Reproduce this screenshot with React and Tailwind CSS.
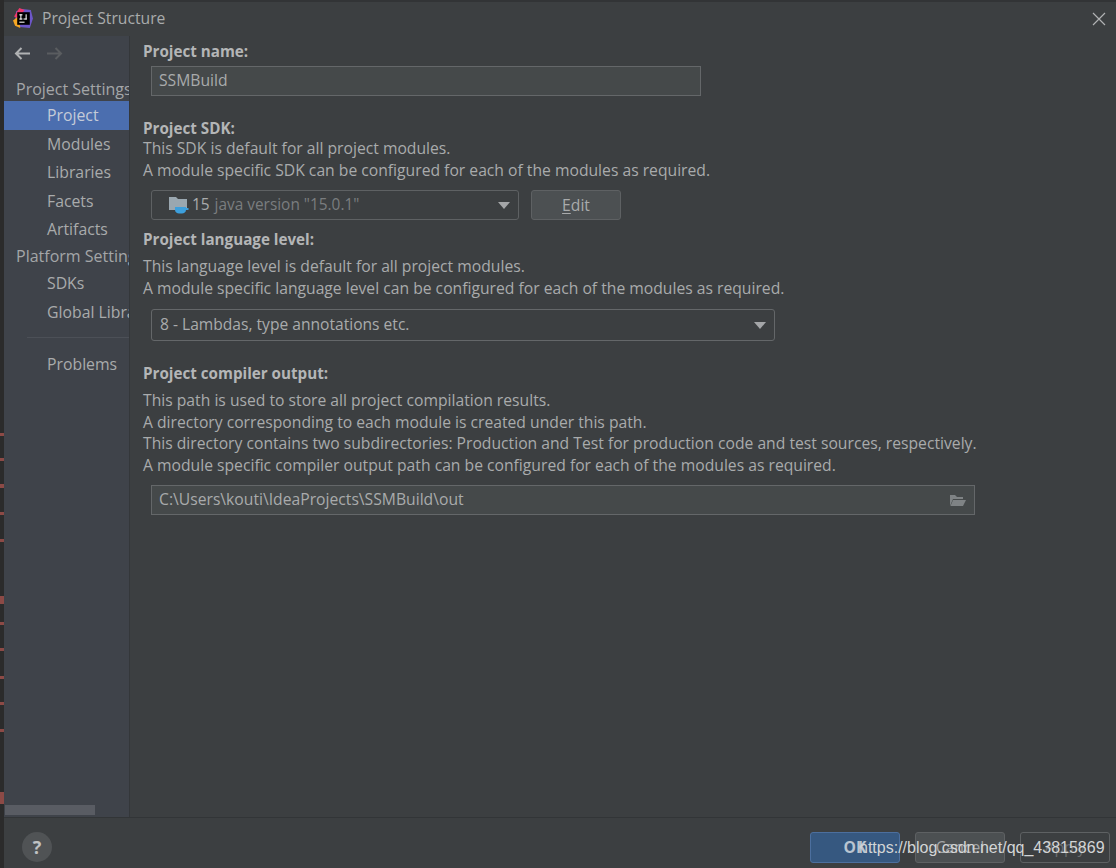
const font = { fontFamily: '"Open Sans", "Noto Sans", sans-serif' };

const Label = ({ children, className = "" }) => (
  <div className={`text-[15.2px] leading-[20px] font-bold text-[#b4b6b7] ${className}`}>{children}</div>
);

const Desc = ({ children }) => (
  <div className="text-[15.7px] leading-[21.5px] text-[#a9abac] whitespace-nowrap">{children}</div>
);

const NavItem = ({ label, active }) => (
  <div
    className={`h-[28.6px] pl-[43px] text-[15.8px] leading-[28px] whitespace-nowrap overflow-hidden ${
      active ? "bg-[#4b6eaf] text-[#c4cbd8]" : "text-[#a9abac]"
    }`}
  >
    {label}
  </div>
);

const NavHeader = ({ label, className }) => (
  <div className={`pl-[12px] text-[16px] text-[#a4a6a8] whitespace-nowrap overflow-hidden ${className}`}>
    {label}
  </div>
);

const Caret = () => (
  <svg width="12" height="7" viewBox="0 0 12 7">
    <path d="M0 0H12L6 7Z" fill="#a4a6a8" />
  </svg>
);

// red marks of the editor gutter, top to bottom
const marks = [
  "mt-[433px] h-[3px]",
  "mt-[22px] h-[3px]",
  "mt-[23px] h-[4px]",
  "mt-[24px] h-[3px]",
  "mt-[24px] h-[3px]",
  "mt-[54px] h-[8px]",
  "mt-[18px] h-[3px]",
  "mt-[23px] h-[3px]",
  "mt-[25px] h-[3px]",
  "mt-[23px] h-[3px]",
  "mt-[24px] h-[3px]",
  "mt-[60px] h-[12px]",
];

const App = () => {
  return (
    <div className="w-[1116px] h-[868px] flex bg-[#3c3f41] overflow-hidden" style={font}>
      {/* editor peeking out behind the dialog */}
      <div className="w-[4px] bg-[#2b2b2b] flex flex-col shrink-0">
        {marks.map((m, i) => (
          <div key={i} className={`${m} bg-[#8c4a46]`} />
        ))}
      </div>

      <div className="flex-1 flex flex-col min-w-0">
        {/* title bar */}
        <div className="h-[36px] flex items-center shrink-0 relative">
          <div className="absolute left-0 top-0 w-full h-[2px] bg-[#323436]" />
          <svg width="21" height="21" viewBox="0 0 20 20" className="ml-[9px] mt-[1px]">
            <path d="M3 3L9 1L17 2L19 10L16 19L6 18L2 12Z" fill="#6d57c9" />
            <path d="M1 8L6 0L11 2L5 10Z" fill="#f0386b" />
            <path d="M0 12L5 8L7 19L2 17Z" fill="#f5a623" />
            <rect x="4" y="4" width="12" height="12" fill="#000" />
            <rect x="6" y="13" width="5" height="1" fill="#fff" />
            <rect x="6" y="6" width="3" height="1" fill="#fff" />
            <rect x="7" y="6" width="1" height="5" fill="#fff" />
            <rect x="6" y="10" width="3" height="1" fill="#fff" />
            <rect x="12" y="6" width="1" height="5" fill="#fff" />
            <rect x="10" y="10" width="3" height="1" fill="#fff" />
          </svg>
          <div className="ml-[8px] mt-[2px] text-[15.7px] text-[#a9abac]">Project Structure</div>
          <svg width="14" height="14" viewBox="0 0 14 14" className="absolute left-[1088px] top-[12px]">
            <path d="M1 1L13 13M13 1L1 13" stroke="#b0b2b3" strokeWidth="1.2" fill="none" />
          </svg>
        </div>

        <div className="flex-1 flex min-h-0">
          {/* sidebar */}
          <div className="w-[125px] shrink-0 bg-[#3f434a] flex flex-col relative">
            <div className="h-[39px] flex items-center pb-[4px] pl-[10px] gap-[15px] shrink-0">
              <svg width="17" height="13" viewBox="0 0 17 13">
                <path d="M16 6.5H2M7.5 1L2 6.5L7.5 12" stroke="#b0b2b3" strokeWidth="2" fill="none" />
              </svg>
              <svg width="17" height="13" viewBox="0 0 17 13">
                <path d="M1 6.5H15M9.5 1L15 6.5L9.5 12" stroke="#5a5d60" strokeWidth="2" fill="none" />
              </svg>
            </div>
            <NavHeader label="Project Settings" className="h-[26px] leading-[29px]" />
            <NavItem label="Project" active />
            <NavItem label="Modules" />
            <NavItem label="Libraries" />
            <NavItem label="Facets" />
            <NavItem label="Artifacts" />
            <NavHeader label="Platform Settings" className="h-[25px] leading-[25px]" />
            <NavItem label="SDKs" />
            <NavItem label="Global Libraries" />
            <div className="h-[1px] bg-[#4c5057] ml-[23px] mt-[11px] mb-[12px]" />
            <NavItem label="Problems" />
            <div className="mt-auto h-[10px] w-[90px] ml-[1px] bg-[#595c63] mb-[2px]" />
          </div>

          {/* content */}
          <div className="flex-1 border-l border-[#34373a] pl-[13px] pt-[5px] min-w-0">
            <Label>Project name:</Label>
            <div className="mt-[5px] ml-[8px] w-[550px] h-[30px] border border-[#646769] bg-[#45494a] pl-[7px] text-[15.7px] leading-[27px] text-[#a9abac]">
              SSMBuild
            </div>

            <Label className="mt-[22px]">Project SDK:</Label>
            <div>
              <Desc>This SDK is default for all project modules.</Desc>
              <Desc>A module specific SDK can be configured for each of the modules as required.</Desc>
            </div>
            <div className="mt-[9px] ml-[8px] flex gap-[12px]">
              <div className="w-[368px] h-[30px] border border-[#5e6163] rounded-[3px] bg-[#3c3f41] flex items-center pl-[17px] pr-[8px]">
                <svg width="20" height="18" viewBox="0 0 20 18" className="shrink-0">
                  <path d="M0 1H7L9 3H18V14H0Z" fill="#9aa7b0" />
                  <path d="M6 11H17V14C17 16 15 17.5 13 17.5H10C8 17.5 6 16 6 14Z" fill="#3d9fdc" />
                  <path d="M17 12H19.5V14H17Z" fill="#3d9fdc" />
                </svg>
                <span className="ml-[3px] text-[15.4px] text-[#a9abac]">15</span>
                <span className="ml-[5px] text-[15.4px] text-[#7a7d7f]">java version "15.0.1"</span>
                <span className="ml-auto flex"><Caret /></span>
              </div>
              <div className="w-[90px] h-[30px] border border-[#5e6163] rounded-[3px] bg-[#4c5052] text-center text-[15.7px] leading-[28px] text-[#a9abac]">
                <span className="underline underline-offset-2">E</span>dit
              </div>
            </div>

            <Label className="mt-[9px]">Project language level:</Label>
            <div className="mt-[7px]">
              <Desc>This language level is default for all project modules.</Desc>
              <Desc>A module specific language level can be configured for each of the modules as required.</Desc>
            </div>
            <div className="mt-[10px] ml-[8px] w-[624px] h-[32px] border border-[#646769] rounded-[3px] flex items-center pl-[8px] pr-[8px]">
              <span className="text-[15.6px] text-[#a9abac]">8 - Lambdas, type annotations etc.</span>
              <span className="ml-auto flex"><Caret /></span>
            </div>

            <Label className="mt-[22px]">Project compiler output:</Label>
            <div className="mt-[7px]">
              <Desc>This path is used to store all project compilation results.</Desc>
              <Desc>A directory corresponding to each module is created under this path.</Desc>
              <Desc>This directory contains two subdirectories: Production and Test for production code and test sources, respectively.</Desc>
              <Desc>A module specific compiler output path can be configured for each of the modules as required.</Desc>
            </div>
            <div className="mt-[9px] ml-[8px] w-[824px] h-[30px] border border-[#646769] bg-[#45494a] flex items-center pl-[7px] pr-[7px]">
              <span className="text-[15.7px] text-[#a9abac]">C:\Users\kouti\IdeaProjects\SSMBuild\out</span>
              <svg width="19" height="14" viewBox="0 0 19 14" className="ml-auto">
                <path d="M2 13V2H7L9 4H15V6H5L2 13Z" fill="#7f8385" />
                <path d="M5 7H18L15 13H2.5Z" fill="#7f8385" />
              </svg>
            </div>
          </div>
        </div>

        {/* footer */}
        <div className="h-[51px] shrink-0 border-t border-[#323537] flex items-start pt-[14px] relative">
          <div className="ml-[18px] w-[30px] h-[30px] rounded-full bg-[#505355] text-center text-[18px] leading-[30px] font-bold text-[#c0c2c3]">
            ?
          </div>
          <div className="ml-auto mr-[6px] flex gap-[15px]">
            <div className="w-[90px] h-[31px] rounded-[3px] border border-[#4c6f9e] bg-[#365880] text-center text-[15.7px] leading-[29px] font-bold text-[#b9c4d0]">
              OK
            </div>
            <div className="w-[90px] h-[31px] rounded-[3px] border border-[#5e6163] bg-[#4c5052] text-center text-[15.7px] leading-[29px] text-[#a4a6a8]">
              Cancel
            </div>
            <div className="w-[90px] h-[31px] rounded-[3px] border border-[#5e6163] text-center text-[15.7px] leading-[29px] text-[#6a6d6f]">
              Apply
            </div>
          </div>
          {/* blog watermark over the buttons */}
          <div
            className="absolute left-[855px] top-[18px] text-[16px] leading-[24px] text-[#d3d5d6] whitespace-nowrap"
            style={{ fontFamily: '"Liberation Sans", Arial, sans-serif' }}
          >
            https://blog.csdn.net/qq_43815869
          </div>
        </div>
      </div>
    </div>
  );
};

export default App;
